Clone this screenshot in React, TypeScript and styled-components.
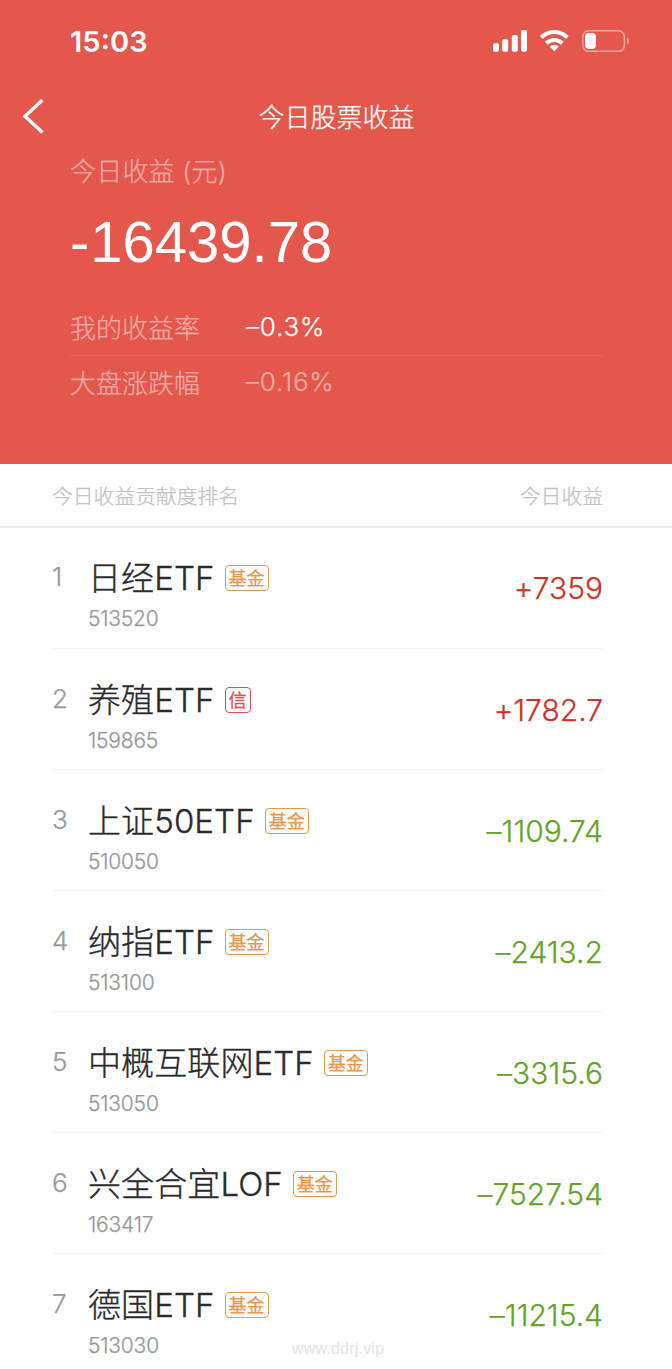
import React from "react";
import styled, { createGlobalStyle } from "styled-components";

const GlobalStyle = createGlobalStyle`
  body {
    margin: 0;
    background: #fefefe;
    font-family: Inter, "Noto Sans CJK SC", sans-serif;
    font-weight: 300;
    font-feature-settings: "calt" 0;
    -webkit-text-stroke: 0.25px currentColor;
  }
`;

const Screen = styled.main`
  position: relative;
  width: 672px;
  height: 1369px;
  overflow: hidden;
  background: #fefefe;
`;

const Hero = styled.header`
  height: 464px;
  box-sizing: border-box;
  background: #e3574c;
  color: #fff;
`;

const StatusBar = styled.div`
  display: flex;
  justify-content: space-between;
  align-items: flex-start;
  box-sizing: border-box;
  height: 82px;
  padding: 24px 42px 0 70px;
`;

const Clock = styled.span`
  font-size: 29px;
  line-height: 36px;
  font-weight: 600;
  letter-spacing: 0.1px;
  font-feature-settings: "calt" 1;
  -webkit-text-stroke: 0;
`;

const StatusIcons = styled.svg`
  display: block;
  width: 138px;
  height: 26px;
  margin-top: 2px;
`;

const NavBar = styled.nav`
  display: grid;
  grid-template-columns: 70px 1fr 70px;
  align-items: center;
  height: 68px;
  font-size: 26px;
  line-height: 38px;
`;

const BackIcon = styled.svg`
  width: 24px;
  height: 36px;
  margin-left: 22px;
`;

const Title = styled.h1`
  margin: 0;
  padding: 3px 0 0 1px;
  font-size: 26px;
  font-weight: 300;
  text-align: center;
`;

const Summary = styled.section`
  padding: 3px 69px 0 70px;
`;

const SummaryLabel = styled.div`
  font-size: 26px;
  line-height: 38px;
  color: #f2aaa4;
  letter-spacing: 0.2px;
`;

const Total = styled.div`
  margin-top: 18px;
  font-family: "Liberation Sans", sans-serif;
  font-size: 58px;
  line-height: 66px;
  font-weight: 400;
  -webkit-text-stroke: 0;

  &::first-letter {
    letter-spacing: 1px;
  }
`;

const Rates = styled.dl`
  margin: 26px 0 0;
`;

const RateRow = styled.div<{ $bright?: boolean }>`
  display: grid;
  grid-template-columns: 176px 1fr;
  align-items: center;
  height: 54px;
  font-size: 26px;
  color: ${(p) => (p.$bright ? "#fff" : "#f2aaa4")};
  border-bottom: 1px solid ${(p) => (p.$bright ? "#e7665c" : "transparent")};
`;

const RateName = styled.dt`
  padding-bottom: 4px;
  color: #f2aaa4;
`;

const RateValue = styled.dd`
  margin: 0;
  padding-bottom: 3px;
  letter-spacing: 0.8px;
`;

const ListHeader = styled.div`
  display: flex;
  justify-content: space-between;
  align-items: center;
  height: 62px;
  padding: 0 69px 0 52px;
  border-bottom: 2px solid #ececec;
  font-size: 20.8px;
  color: #c2c2c2;
`;

const List = styled.ol`
  margin: 0;
  padding: 0 69px 0 52px;
  list-style: none;
`;

const Row = styled.li`
  display: grid;
  grid-template-columns: 36px 1fr auto;
  box-sizing: border-box;
  height: 121px;
  padding-top: 27px;
  border-bottom: 1px solid #f5f5f5;

  &:first-child {
    padding-top: 26px;
  }
`;

const Rank = styled.span`
  padding-top: 7px;
  font-size: 26px;
  line-height: 32px;
  color: #999;
`;

const NameLine = styled.div`
  display: flex;
  align-items: center;
  height: 48px;
`;

const Name = styled.span`
  font-size: 33px;
  line-height: 48px;
  color: #2b2b2b;
  letter-spacing: 0.1px;
  -webkit-text-stroke: 0.35px currentColor;
`;

const Tag = styled.span<{ $tone: string }>`
  box-sizing: border-box;
  height: 26px;
  margin-left: 10px;
  padding: 0 3px;
  border: 1px solid ${(p) => p.$tone};
  border-radius: 4px;
  font-size: 18px;
  line-height: 25px;
  font-weight: 400;
  color: ${(p) => p.$tone};
`;

const Code = styled.div`
  margin-top: 3px;
  font-size: 21px;
  line-height: 28px;
  letter-spacing: -0.2px;
  color: #999;
`;

const Amount = styled.span<{ $gain: boolean }>`
  padding-top: 15px;
  font-size: 30px;
  line-height: 38px;
  color: ${(p) => (p.$gain ? "#cf3127" : "#66a22b")};
`;

const SiteMark = styled.footer`
  position: absolute;
  left: 292px;
  top: 1338px;
  font-family: "Liberation Sans", sans-serif;
  font-size: 16px;
  line-height: 22px;
  letter-spacing: 0.2px;
  -webkit-text-stroke: 0;
  color: #e4e4e4;
`;

const FUND = { text: "基金", tone: "#e9964b" };
const CREDIT = { text: "信", tone: "#dc524f" };

const holdings = [
  { name: "日经ETF", code: "513520", amount: "+7359", tag: FUND },
  { name: "养殖ETF", code: "159865", amount: "+1782.7", tag: CREDIT },
  { name: "上证50ETF", code: "510050", amount: "–1109.74", tag: FUND },
  { name: "纳指ETF", code: "513100", amount: "–2413.2", tag: FUND },
  { name: "中概互联网ETF", code: "513050", amount: "–3315.6", tag: FUND },
  { name: "兴全合宜LOF", code: "163417", amount: "–7527.54", tag: FUND },
  { name: "德国ETF", code: "513030", amount: "–11215.4", tag: FUND },
];

const PhoneStatus = () => (
  <StatusIcons viewBox="0 0 138 26" fill="none">
    <g fill="#fff">
      <rect x="1" y="17.2" width="6" height="8.6" rx="1.8" />
      <rect x="10.2" y="13.2" width="6" height="12.6" rx="1.8" />
      <rect x="19.8" y="9" width="6" height="16.8" rx="1.8" />
      <rect x="29" y="4" width="6" height="21.8" rx="1.8" />
      <path d="M62.3 18.8c2 0 3.4.8 4.4 1.8l-4.4 5-4.4-5c1-1 2.4-1.8 4.4-1.8z" />
    </g>
    <path d="M49.3 11.4c7.6-7.2 18.4-7.2 26 0" stroke="#fff" strokeWidth="4.2" />
    <path d="M54.3 17.2c4.5-4.2 11.5-4.2 16 0" stroke="#fff" strokeWidth="4" />
    <rect x="90.8" y="4.8" width="41.6" height="20.6" rx="6" stroke="#f0a49e" strokeWidth="1.6" />
    <rect x="93" y="7" width="11" height="16" rx="4" fill="#fff" />
    <path d="M135 11.5c2.6 1.2 2.6 5.8 0 7z" fill="#f0a49e" />
  </StatusIcons>
);

export default function App() {
  return (
    <Screen>
      <GlobalStyle />
      <Hero>
        <StatusBar>
          <Clock>15:03</Clock>
          <PhoneStatus />
        </StatusBar>
        <NavBar>
          <BackIcon viewBox="0 0 24 36" fill="none">
            <path d="M20.5 2L3 18.3L20.5 34.5" stroke="#fff" strokeWidth="3.4" />
          </BackIcon>
          <Title>今日股票收益</Title>
        </NavBar>
        <Summary>
          <SummaryLabel>今日收益 (元)</SummaryLabel>
          <Total>-16439.78</Total>
          <Rates>
            <RateRow $bright>
              <RateName>我的收益率</RateName>
              <RateValue>–0.3%</RateValue>
            </RateRow>
            <RateRow>
              <RateName>大盘涨跌幅</RateName>
              <RateValue>–0.16%</RateValue>
            </RateRow>
          </Rates>
        </Summary>
      </Hero>
      <ListHeader>
        <span>今日收益贡献度排名</span>
        <span>今日收益</span>
      </ListHeader>
      <List>
        {holdings.map((item, i) => (
          <Row key={item.code}>
            <Rank>{i + 1}</Rank>
            <div>
              <NameLine>
                <Name>{item.name}</Name>
                <Tag $tone={item.tag.tone}>{item.tag.text}</Tag>
              </NameLine>
              <Code>{item.code}</Code>
            </div>
            <Amount $gain={item.amount.startsWith("+")}>{item.amount}</Amount>
          </Row>
        ))}
      </List>
      <SiteMark>www.ddrj.vip</SiteMark>
    </Screen>
  );
}
